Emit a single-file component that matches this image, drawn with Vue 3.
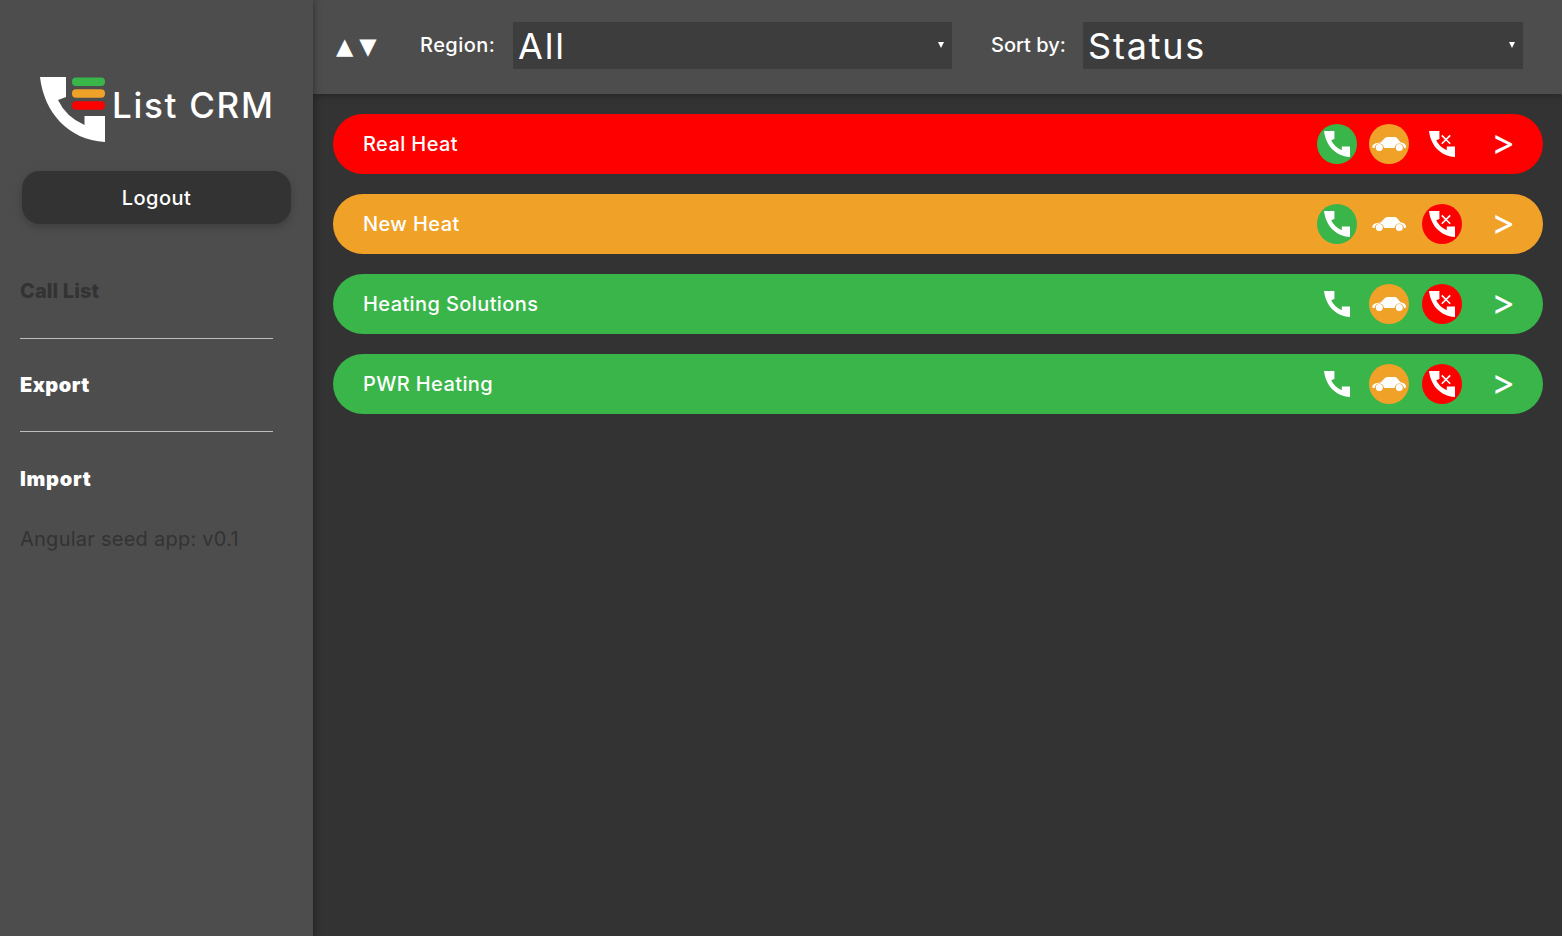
<script setup>
const rows = [
  { name: 'Real Heat', color: 'red', call: true, visit: true, miss: false },
  { name: 'New Heat', color: 'orange', call: true, visit: false, miss: true },
  { name: 'Heating Solutions', color: 'green', call: false, visit: true, miss: true },
  { name: 'PWR Heating', color: 'green', call: false, visit: true, miss: true },
]
const phone = 'M0 0H26V20L18 23Q26 40 44.5 48V39H65V65C28 63 4 35 0 0Z'
const car = 'M.5 11C-.5 7.500 3 6 8.500 5.500L13 1Q14 0 16 0H22.500Q24 0 25 1L28.500 5.200C32 5.700 34 7 34 9.500C34 10.500 33.500 11 33 11H31.900A4.600 4.600 0 0 0 22.700 11H11.900A4.600 4.600 0 0 0 2.700 11Z'
</script>

<template>
  <div class="app">
    <aside class="sidebar">
      <div class="logo">
        <svg class="logo-mark" viewBox="0 0 65 65" width="65" height="65">
          <path :d="phone" fill="#fff" />
          <rect x="32" y="0.400" width="33" height="8.500" rx="4" fill="#39b54a" />
          <rect x="32" y="12.300" width="33" height="8.500" rx="4" fill="#f0a128" />
          <rect x="32" y="24.300" width="33" height="8.500" rx="4" fill="#f00" />
        </svg>
        <span class="logo-text">List CRM</span>
      </div>
      <button class="logout">Logout</button>
      <nav class="nav">
        <a class="nav-item current">Call List</a>
        <a class="nav-item">Export</a>
        <a class="nav-item">Import</a>
      </nav>
      <div class="version">Angular seed app: v0.1</div>
    </aside>
    <main class="main">
      <header class="toolbar">
        <div class="arrows"><span>▲</span><span>▼</span></div>
        <label class="lbl region-lbl">Region:</label>
        <div class="sel-wrap region-sel"><select class="sel"><option>All</option></select></div>
        <label class="lbl sort-lbl">Sort by:</label>
        <div class="sel-wrap sort-sel"><select class="sel"><option>Status</option></select></div>
      </header>
      <section class="list">
        <div v-for="r in rows" :key="r.name" class="row" :class="r.color">
          <span class="name">{{ r.name }}</span>
          <span class="act" :class="{ 'bg-green': r.call }">
            <svg viewBox="0 0 65 65" width="26" height="26"><path :d="phone" fill="#fff" /></svg>
          </span>
          <span class="act" :class="{ 'bg-orange': r.visit }">
            <svg viewBox="0 0 34 14" width="34" height="14">
              <path :d="car" fill="#fff" />
              <circle cx="7.300" cy="10.500" r="3.500" fill="#fff" />
              <circle cx="27.300" cy="10.500" r="3.500" fill="#fff" />
            </svg>
          </span>
          <span class="act" :class="{ 'bg-red': r.miss }">
            <svg viewBox="0 0 65 65" width="26" height="26">
              <path :d="phone" fill="#fff" />
              <path d="M32 11L53 32M53 11L32 32" stroke="#fff" stroke-width="4" fill="none" />
            </svg>
          </span>
          <span class="go">&gt;</span>
        </div>
      </section>
    </main>
  </div>
</template>

<style>
html, body { margin: 0; background: #333; }
</style>

<style scoped>
.app {
  display: flex;
  height: 936px;
  overflow: hidden;
  font-family: Inter, "Liberation Sans", sans-serif;
  color: #fff;
  background: #333;
}
.sidebar {
  width: 313px;
  flex: none;
  box-sizing: border-box;
  padding: 77px 20px 0;
  background: #4d4d4d;
  box-shadow: 0 0 8px rgba(0, 0, 0, .45);
  z-index: 2;
}
.logo {
  display: flex;
  align-items: flex-start;
  margin-left: 20px;
  height: 65px;
}
.logo-mark { flex: none; display: block; }
.logo-text {
  margin: 7px 0 0 7px;
  font-size: 35px;
  line-height: 42px;
  font-weight: 500;
  letter-spacing: 1.700px;
  white-space: nowrap;
}
.logout {
  display: block;
  width: 269px;
  height: 53px;
  margin: 29px 0 0 2px;
  border: 0;
  border-radius: 18px;
  background: #333;
  color: #fff;
  font: 500 20px Inter, "Liberation Sans", sans-serif;
  letter-spacing: .45px;
  box-shadow: 0 3px 8px rgba(0, 0, 0, .2);
}
.nav { display: flex; flex-direction: column; width: 253px; margin-top: 21px; }
.nav-item {
  height: 93.500px;
  box-sizing: border-box;
  padding-top: 33px;
  font-size: 20px;
  line-height: 26px;
  font-weight: 900;
  letter-spacing: .45px;
  border-bottom: 1px solid #bdbdbd;
}
.nav-item:last-child { border-bottom: 0; height: 94px; padding-top: 34px; letter-spacing: .7px; }
.current { color: #333; font-weight: 800; letter-spacing: .1px; }
.version {
  font-size: 20px;
  line-height: 26px;
  color: #333;
  letter-spacing: .25px;
}
.main { flex: 1; min-width: 0; }
.toolbar {
  display: flex;
  align-items: center;
  height: 94px;
  box-sizing: border-box;
  padding: 0 0 3px 22px;
  background: #4d4d4d;
  box-shadow: 0 2px 6px rgba(0, 0, 0, .25);
}
.arrows {
  display: flex;
  gap: 6px;
  width: 84px;
  margin-left: 1px;
  flex: none;
  font-family: "DejaVu Sans", sans-serif;
  font-size: 22.500px;
  line-height: 26px;
}
.lbl { font-size: 20px; font-weight: 500; flex: none; margin-bottom: 2px; }
.region-lbl { width: 93px; letter-spacing: .45px; }
.sort-lbl { margin-left: 39px; width: 92px; letter-spacing: 0; }
.sel-wrap { position: relative; height: 47px; flex: none; }
.sel-wrap::after {
  content: "";
  position: absolute;
  right: 8px;
  top: 20px;
  border-left: 3.500px solid transparent;
  border-right: 3.500px solid transparent;
  border-top: 6.500px solid #fff;
  pointer-events: none;
}
.sel {
  display: block;
  width: 100%;
  height: 47px;
  appearance: none;
  border: 0;
  border-radius: 0;
  padding: 0 0 0 5px;
  background-color: #3d3d3d;
  color: #fff;
  font: 400 36px Inter, "Liberation Sans", sans-serif;
  letter-spacing: 1.800px;
}
.region-sel { width: 439px; }
.sort-sel { width: 440px; }
.list { display: flex; flex-direction: column; gap: 20px; padding: 20px 19px 0 20px; }
.row {
  display: flex;
  align-items: center;
  height: 60px;
  padding: 0 30px;
  border-radius: 30px;
}
.red { background: #f00; }
.orange { background: #f0a128; }
.green { background: #39b54a; }
.name { flex: 1; font-size: 20px; font-weight: 500; letter-spacing: .4px; }
.act {
  width: 40px;
  height: 40px;
  margin-right: 12.500px;
  border-radius: 50%;
  display: flex;
  align-items: center;
  justify-content: center;
  flex: none;
}
.bg-green { background: #39b54a; }
.bg-orange { background: #f0a128; }
.bg-red { background: #f00; }
.go {
  width: 41px;
  margin: -4px -2px 0 0;
  text-align: right;
  font-size: 36px;
  line-height: 40px;
  flex: none;
}
</style>
